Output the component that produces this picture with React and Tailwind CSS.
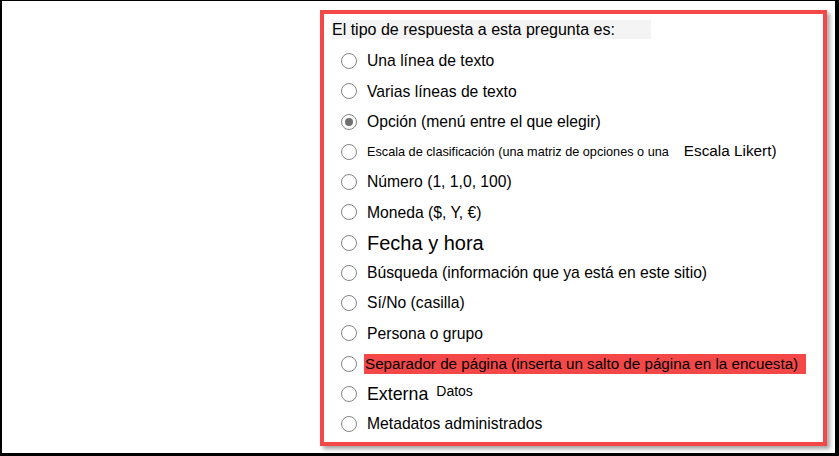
import React from 'react';

const rows = [
  { key: 'una', label: 'Una línea de texto' },
  { key: 'varias', label: 'Varias líneas de texto' },
  { key: 'opcion', label: 'Opción (menú entre el que elegir)', checked: true },
  { key: 'escala', kind: 'escala' },
  { key: 'numero', label: 'Número (1, 1,0, 100)' },
  { key: 'moneda', label: 'Moneda ($, Y, €)' },
  { key: 'fecha', kind: 'fecha' },
  { key: 'busqueda', label: 'Búsqueda (información que ya está en este sitio)' },
  { key: 'sino', label: 'Sí/No (casilla)' },
  { key: 'persona', label: 'Persona o grupo' },
  { key: 'separador', kind: 'separador' },
  { key: 'externa', kind: 'externa' },
  { key: 'metadatos', label: 'Metadatos administrados' },
];

function Radio({ checked }) {
  return (
    <span className="ml-[9px] w-[16px] h-[16px] shrink-0 rounded-full border-[1.5px] border-[#858585] bg-white flex items-center justify-center">
      {checked && <span className="w-[8px] h-[8px] rounded-full bg-[#707070]" />}
    </span>
  );
}

function Label({ row }) {
  if (row.kind === 'escala') {
    return (
      <span className="flex items-baseline whitespace-nowrap">
        <span className="text-[12.7px]">Escala de clasificación (una matriz de opciones o una</span>
        <span className="ml-[15px] text-[15.3px]">Escala Likert)</span>
      </span>
    );
  }
  if (row.kind === 'fecha') {
    return <span className="text-[20px] whitespace-nowrap">Fecha y hora</span>;
  }
  if (row.kind === 'separador') {
    return (
      <span className="-ml-[3px] pl-[1px] w-[442px] h-[20px] bg-[#f44848] text-[15.2px] leading-[20px] whitespace-nowrap">
        Separador de página (inserta un salto de página en la encuesta)
      </span>
    );
  }
  if (row.kind === 'externa') {
    return (
      <span className="flex items-baseline whitespace-nowrap">
        <span className="text-[17.8px]">Externa</span>
        <span className="ml-[8px] text-[14px] relative -top-[4px]">Datos</span>
      </span>
    );
  }
  return <span className="whitespace-nowrap">{row.label}</span>;
}

export default function App() {
  return (
    <div className="w-[839px] h-[456px] bg-white border-l-2 border-t border-r-4 border-b-[3px] border-black pl-[318px] pt-[9px] text-black font-['Liberation_Sans',Arial,sans-serif]">
      <div className="w-[507px] h-[436px] border-4 border-[#f24848] shadow-[3px_3px_4px_rgba(0,0,0,0.35)] pl-2 pt-[6px] bg-white">
        <div className="w-[319px] h-[19px] bg-[#f4f4f4] text-[16px] leading-[19px] whitespace-nowrap">
          El tipo de respuesta a esta pregunta es:
        </div>
        <div className="mt-[7px] flex flex-col text-[15.7px]">
          {rows.map((row) => (
            <div key={row.key} className="h-[30.25px] flex items-center">
              <Radio checked={row.checked} />
              <span className="ml-[10px] flex items-center">
                <Label row={row} />
              </span>
            </div>
          ))}
        </div>
      </div>
    </div>
  );
}
